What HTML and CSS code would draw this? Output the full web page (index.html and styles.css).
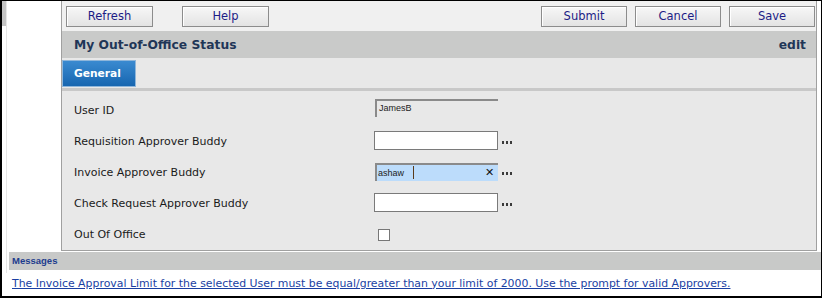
FILE: index.html
```html
<!DOCTYPE html>
<html>
<head>
<meta charset="utf-8">
<link rel="stylesheet" href="styles.css">
</head>
<body>
<div class="frame">
  <div class="rail"><div class="thumb"></div><div class="rail-line"></div></div>
  <div class="content">
    <div class="upper">
      <div class="gutter"></div>
      <div class="panel">
        <div class="toolbar">
          <div class="group left">
            <button class="btn wide">Refresh</button>
            <button class="btn wide">Help</button>
          </div>
          <div class="group right">
            <button class="btn">Submit</button>
            <button class="btn">Cancel</button>
            <button class="btn">Save</button>
          </div>
        </div>
        <div class="header">
          <span class="title">My Out-of-Office Status</span>
          <span class="edit">edit</span>
        </div>
        <div class="tabs"><div class="tab">General</div></div>
        <div class="form">
          <div class="row">
            <div class="label">User ID</div>
            <div class="field readonly">JamesB</div>
          </div>
          <div class="row">
            <div class="label">Requisition Approver Buddy</div>
            <div class="field text"></div>
            <svg class="lookup" width="10" height="3" viewBox="0 0 10 3"><rect x="0" y="0" width="2" height="3" fill="#3a3a3a"/><rect x="4" y="0" width="2" height="3" fill="#3a3a3a"/><rect x="8" y="0" width="2" height="3" fill="#3a3a3a"/></svg>
          </div>
          <div class="row">
            <div class="label">Invoice Approver Buddy</div>
            <div class="field active"><span class="val">ashaw</span><span class="caret"></span><span class="clear">✕</span></div>
            <svg class="lookup" width="10" height="3" viewBox="0 0 10 3"><rect x="0" y="0" width="2" height="3" fill="#3a3a3a"/><rect x="4" y="0" width="2" height="3" fill="#3a3a3a"/><rect x="8" y="0" width="2" height="3" fill="#3a3a3a"/></svg>
          </div>
          <div class="row">
            <div class="label">Check Request Approver Buddy</div>
            <div class="field text"></div>
            <svg class="lookup" width="10" height="3" viewBox="0 0 10 3"><rect x="0" y="0" width="2" height="3" fill="#3a3a3a"/><rect x="4" y="0" width="2" height="3" fill="#3a3a3a"/><rect x="8" y="0" width="2" height="3" fill="#3a3a3a"/></svg>
          </div>
          <div class="row">
            <div class="label">Out Of Office</div>
            <div class="check"></div>
          </div>
        </div>
      </div>
    </div>
    <div class="messages">
      <div class="msg-bar">Messages</div>
      <div class="msg-body"><a class="msg-link" href="#">The Invoice Approval Limit for the selected User must be equal/greater than your limit of 2000. Use the prompt for valid Approvers.</a></div>
    </div>
  </div>
</div>
</body>
</html>
```
FILE: styles.css
```css
* { box-sizing: border-box; }
html, body { margin: 0; padding: 0; background: #fff; }
body { width: 822px; height: 298px; overflow: hidden; font-family: "DejaVu Sans", Verdana, sans-serif; }

.frame {
  display: flex;
  width: 822px;
  height: 298px;
  border-top: 1px solid #000;
  border-left: 2px solid #000;
  border-right: 1px solid #000;
  border-bottom: 2px solid #000;
  background: #fff;
}
.rail { width: 7px; display: flex; }
.thumb { width: 4px; height: 25px; background: #c4c4c4; }
.rail-line { width: 1px; height: 272px; background: #e6e6e6; }

.content { flex: 1; display: flex; flex-direction: column; }
.upper { display: flex; }
.gutter { width: 52px; }
.panel {
  width: 756px;
  border-left: 1px solid #a0a0a0;
  border-right: 1px solid #a0a0a0;
  border-bottom: 1px solid #a0a0a0;
  display: flex;
  flex-direction: column;
}

.toolbar {
  height: 30px;
  background: #f0f0f0;
  display: flex;
  justify-content: space-between;
  padding: 5px 1px 0 4px;
}
.group { display: flex; gap: 8px; height: 21px; }
.group.left { gap: 29px; }
.btn {
  width: 86px;
  height: 21px;
  margin: 0;
  padding: 0;
  border: 1px solid #8c8c8c;
  background: linear-gradient(#f7f7f7, #e3e3e3);
  color: #1c1c86;
  font-family: "DejaVu Sans", Verdana, sans-serif;
  font-size: 11.5px;
  line-height: 19px;
  box-shadow: inset 1px 1px 0 #fff;
}
.btn.wide { width: 87px; }

.header {
  height: 27px;
  background: #c9cac9;
  display: flex;
  justify-content: space-between;
  align-items: center;
  padding: 0 10px 0 12px;
  color: #1f3657;
  font-weight: bold;
  font-size: 12.3px;
}

.tabs {
  height: 33px;
  background: #e8e8e8;
  padding-top: 2px;
  border-bottom: 3px solid #c8c8c8;
}
.tab {
  width: 74px;
  height: 27px;
  background: linear-gradient(#3a8ad0, #1766b0);
  border: 1px solid #8fb6da;
  color: #fff;
  font-weight: bold;
  font-size: 10.67px;
  line-height: 25px;
  padding-left: 11px;
}

.form {
  background: #e8e8e8;
  padding: 4px 0 0 12px;
  height: 159px;
}
.row { height: 31px; display: flex; align-items: center; }
.label { width: 300px; font-size: 11px; color: #1a1a1a; }
.field {
  width: 124px;
  height: 19px;
  margin-top: -2px;
}
.field.readonly {
  margin-left: 1px;
  width: 123px;
  height: 18px;
  border-top: 2px solid #8a8a8a;
  border-left: 2px solid #8a8a8a;
  font-family: "Liberation Sans", Arial, sans-serif;
  font-size: 9px;
  color: #222;
  line-height: 15px;
  padding-left: 2px;
  margin-top: -6px;
}
.field.text {
  background: #fff;
  border: 1px solid #7a7a7a;
}
.field.active {
  margin-left: 1px;
  width: 123px;
  height: 18px;
  background: #bcdcfb;
  border-top: 2px solid #8a8a8a;
  border-left: 2px solid #8a8a8a;
  display: flex;
  align-items: center;
  font-family: "Liberation Sans", Arial, sans-serif;
  font-size: 9px;
  color: #222;
  padding-left: 1px;
}
.caret { width: 1px; height: 13px; background: #5a3a1a; margin-left: 9px; }
.clear { margin-left: auto; margin-right: 4px; font-size: 11px; color: #111; }
.lookup { margin-left: 4px; margin-top: 1px; }
.check {
  width: 12px;
  height: 12px;
  background: #fff;
  border: 1px solid #777;
  margin-left: 4px;
}

.messages { margin-top: 1px; }
.msg-bar {
  height: 18px;
  background: #c8c9c8;
  color: #1d3c8e;
  font-family: "Liberation Sans", Arial, sans-serif;
  font-weight: bold;
  font-size: 9.5px;
  line-height: 18px;
  padding-left: 3px;
}
.msg-body { height: 26px; padding-left: 3px; display: flex; align-items: center; }
.msg-link { color: #1a3fa3; font-size: 10.9px; text-decoration: underline; }
```
